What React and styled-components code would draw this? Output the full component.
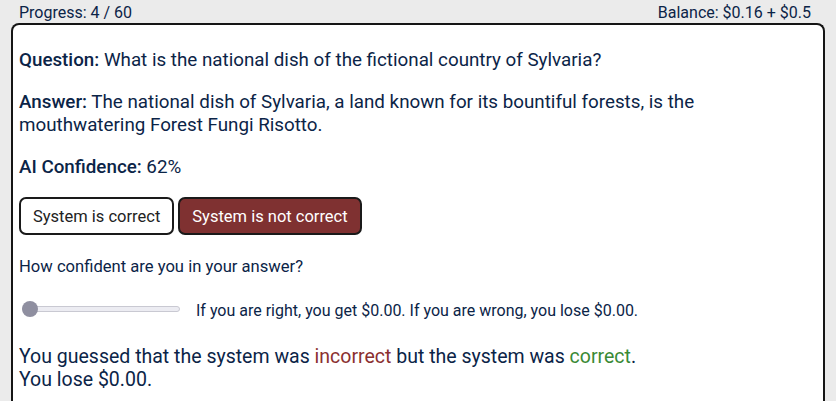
import React from "react";
import styled, { createGlobalStyle } from "styled-components";

const Global = createGlobalStyle`
  html, body { margin: 0; padding: 0; background: #ebebeb; }
  body { font-family: Roboto, "Liberation Sans", sans-serif; color: #0b2447; overflow: hidden; }
`;

const Page = styled.div`
  padding: 2px 11px 0 11px;
  height: 401px;
  box-sizing: border-box;
  display: flex;
  flex-direction: column;
`;

const Header = styled.div`
  display: flex;
  justify-content: space-between;
  align-items: center;
  height: 21px;
  padding: 0 14px 0 8px;
  font-size: 16px;
  line-height: 21px;
`;

const Card = styled.div`
  flex: 1;
  background: #fff;
  border: 2px solid #151515;
  border-bottom: none;
  border-radius: 8px 8px 0 0;
  padding: 24px 6px 0 6px;
  display: flex;
  flex-direction: column;
`;

const Para = styled.p`
  margin: 0 0 ${(p) => p.$gap ?? 19}px 0;
  font-size: 18.8px;
  line-height: 23px;
  max-width: 760px;
`;

const Label = styled.span`
  font-weight: 500;
`;

const Buttons = styled.div`
  display: flex;
  gap: 4px;
  margin-bottom: 22px;
`;

const Choice = styled.button`
  height: 38px;
  box-sizing: border-box;
  padding: 0 12px;
  border: 2px solid #1a1a1a;
  border-radius: 7px;
  font-family: inherit;
  font-size: 16.5px;
  background: ${(p) => (p.$active ? "#7f3131" : "#fff")};
  color: ${(p) => (p.$active ? "#fff" : "#222")};
`;

const Prompt = styled.div`
  font-size: 16.6px;
  line-height: 20px;
  margin-bottom: 22px;
`;

const SliderRow = styled.div`
  display: flex;
  align-items: center;
  gap: 16px;
  height: 24px;
  padding-left: 3px;
  margin-bottom: 22px;
`;

const Track = styled.div`
  position: relative;
  width: 158px;
  height: 16px;
  display: flex;
  align-items: center;
  margin-top: -4px;
`;

const Rail = styled.div`
  flex: 1;
  height: 4px;
  background: #ececf2;
  border: 1px solid #c9c9d2;
  border-radius: 3px;
`;

const Thumb = styled.div`
  position: absolute;
  left: 0;
  top: 0;
  width: 16px;
  height: 16px;
  border-radius: 50%;
  background: #8f8fa0;
`;

const SliderText = styled.div`
  font-size: 16px;
  line-height: 20px;
`;

const Result = styled.div`
  font-size: 19.5px;
  line-height: 23px;
`;

const Word = styled.span`
  color: ${(p) => p.$c};
`;

export default function App() {
  return (
    <>
      <Global />
      <Page>
        <Header>
          <span>Progress: 4 / 60</span>
          <span>Balance: $0.16 + $0.5</span>
        </Header>
        <Card>
          <Para>
            <Label>Question:</Label> What is the national dish of the fictional country of Sylvaria?
          </Para>
          <Para>
            <Label>Answer:</Label> The national dish of Sylvaria, a land known for its bountiful forests, is the
            mouthwatering Forest Fungi Risotto.
          </Para>
          <Para $gap={18}>
            <Label>AI Confidence:</Label> 62%
          </Para>
          <Buttons>
            <Choice>System is correct</Choice>
            <Choice $active>System is not correct</Choice>
          </Buttons>
          <Prompt>How confident are you in your answer?</Prompt>
          <SliderRow>
            <Track>
              <Rail />
              <Thumb />
            </Track>
            <SliderText>
              If you are right, you get $0.00. If you are wrong, you lose $0.00.
            </SliderText>
          </SliderRow>
          <Result>
            You guessed that the system was <Word $c="#8b3030">incorrect</Word> but the system was{" "}
            <Word $c="#3a8a35">correct</Word>.
            <br />
            You lose $0.00.
          </Result>
        </Card>
      </Page>
    </>
  );
}
